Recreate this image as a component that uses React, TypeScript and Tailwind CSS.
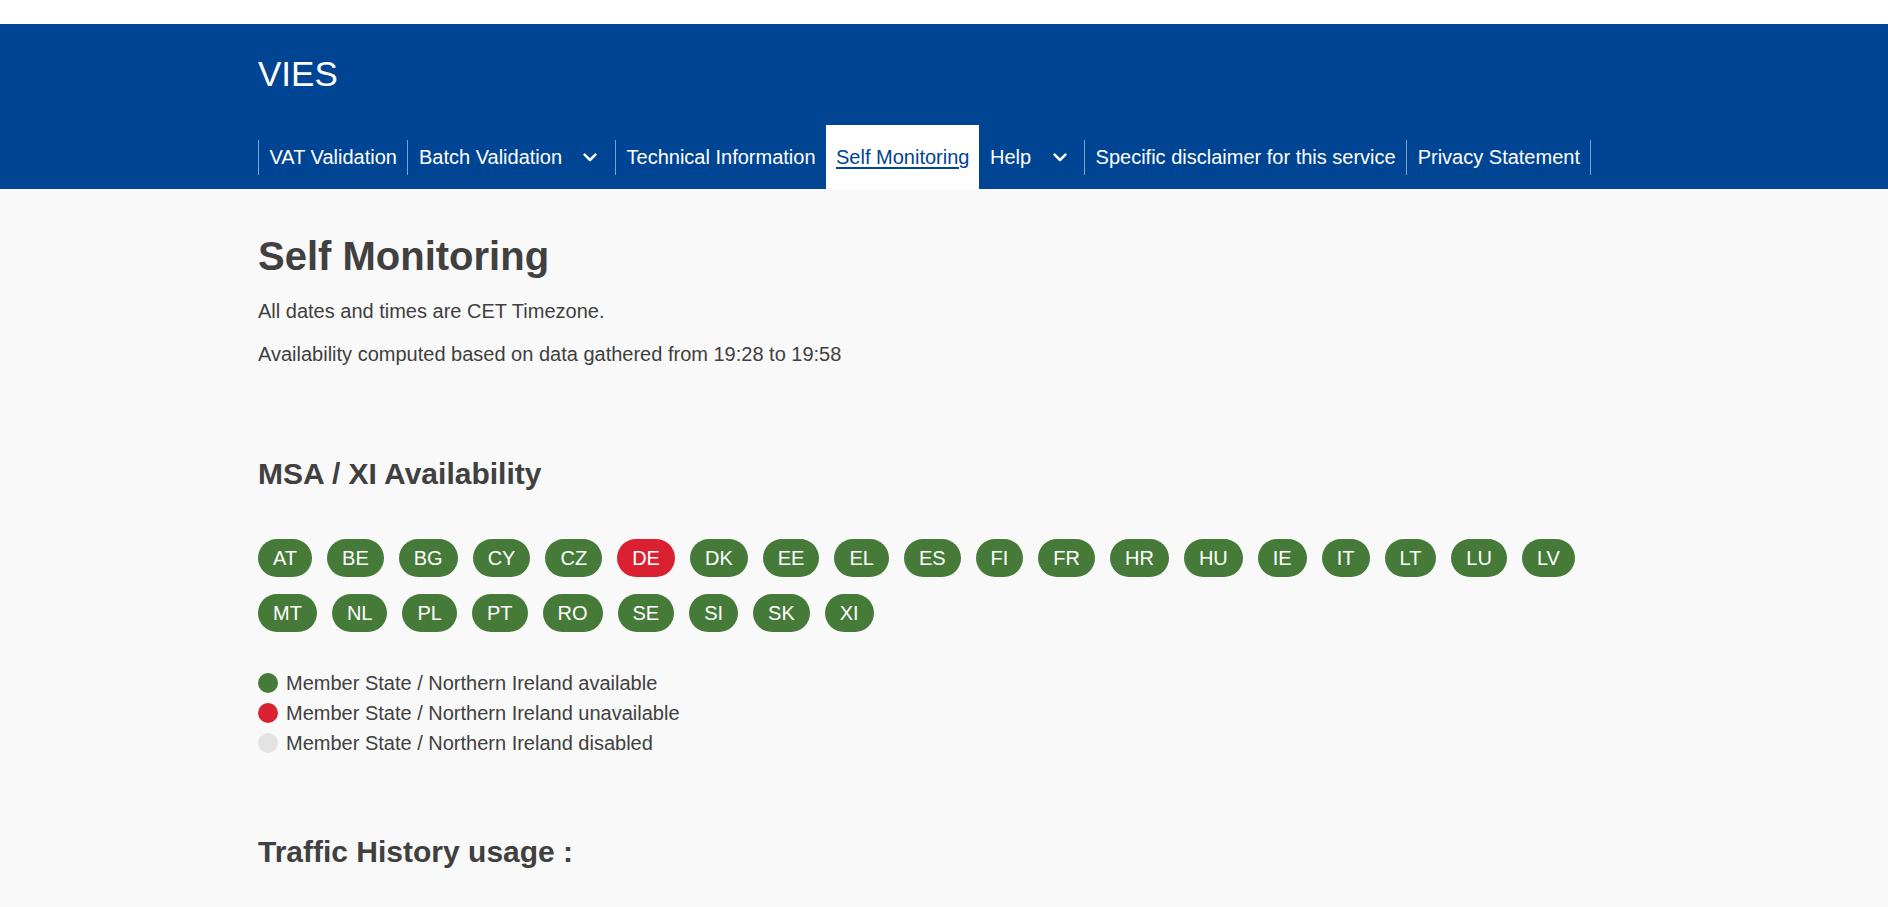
import React from "react";

const row1 = ["AT","BE","BG","CY","CZ","DE","DK","EE","EL","ES","FI","FR","HR","HU","IE","IT","LT","LU","LV"];
const row2 = ["MT","NL","PL","PT","RO","SE","SI","SK","XI"];
const down = new Set(["DE"]);

function Sep() {
  return <span className="my-auto h-[35px] w-px bg-white/50" />;
}

function Chevron() {
  return (
    <svg width="14" height="9" viewBox="0 0 14 9" fill="none" className="shrink-0">
      <polyline points="1.6,1.6 7,7 12.4,1.6" stroke="white" strokeWidth="2.5" strokeLinecap="round" strokeLinejoin="round" />
    </svg>
  );
}

function Item({ children }: { children: React.ReactNode }) {
  return <a className="flex cursor-pointer items-center px-[10.5px] text-[20px] leading-[24px] text-white">{children}</a>;
}

export default function App() {
  const codes = [...row1, ...row2];
  return (
    <div className="min-h-screen bg-[#f9f9f9] font-[family-name:Liberation_Sans,Arial,sans-serif] text-[#404040]">
      <div className="h-[24px] bg-white" />
      <header className="bg-[#004494] text-white">
        <div className="mx-auto w-[1372px]">
          <div className="pt-[29px] text-[35px] leading-[42px]">VIES</div>
          <nav className="mt-[30px] flex h-[64px] items-stretch">
            <Sep />
            <Item>VAT Validation</Item>
            <Sep />
            <a className="flex cursor-pointer items-center pl-[10.5px] pr-[18px] text-[20px] leading-[24px] text-white">
              Batch Validation
              <span className="ml-[21px]"><Chevron /></span>
            </a>
            <Sep />
            <Item>Technical Information</Item>
            <a className="flex cursor-pointer items-center bg-white px-[10px] text-[20px] leading-[24px] text-[#004494] underline underline-offset-[3px]">
              Self Monitoring
            </a>
            <a className="flex cursor-pointer items-center pl-[10.5px] pr-[17px] text-[20px] leading-[24px] text-white">
              Help
              <span className="ml-[22px]"><Chevron /></span>
            </a>
            <Sep />
            <Item>Specific disclaimer for this service</Item>
            <Sep />
            <Item>Privacy Statement</Item>
            <Sep />
          </nav>
        </div>
      </header>
      <main className="mx-auto w-[1372px] pb-20">
        <h1 className="pt-[43px] text-[40px] font-bold leading-[48px]">Self Monitoring</h1>
        <p className="mt-[16px] text-[20px] leading-[30px]">All dates and times are CET Timezone.</p>
        <p className="mt-[13px] text-[20px] leading-[30px]">Availability computed based on data gathered from 19:28 to 19:58</p>
        <h2 className="mt-[87px] text-[30px] font-bold leading-[36px]">MSA / XI Availability</h2>
        <div className="mt-[47px] flex flex-wrap gap-x-[15px] gap-y-[17px]">
          {codes.map((c) => (
            <span
              key={c}
              className={
                "flex h-[38px] items-center rounded-full px-[15px] text-[20px] leading-[24px] text-white " +
                (down.has(c) ? "bg-[#da2131]" : "bg-[#467a39]")
              }
            >
              {c}
            </span>
          ))}
        </div>
        <ul className="mt-[36px] text-[20px] leading-[30px]">
          <li className="flex items-center">
            <span className="mr-[8px] h-[20px] w-[20px] rounded-full bg-[#467a39]" />
            Member State / Northern Ireland available
          </li>
          <li className="flex items-center">
            <span className="mr-[8px] h-[20px] w-[20px] rounded-full bg-[#da2131]" />
            Member State / Northern Ireland unavailable
          </li>
          <li className="flex items-center">
            <span className="mr-[8px] h-[20px] w-[20px] rounded-full bg-[#e3e3e3]" />
            Member State / Northern Ireland disabled
          </li>
        </ul>
        <h2 className="mt-[76px] text-[30px] font-bold leading-[36px]">Traffic History usage :</h2>
      </main>
    </div>
  );
}
